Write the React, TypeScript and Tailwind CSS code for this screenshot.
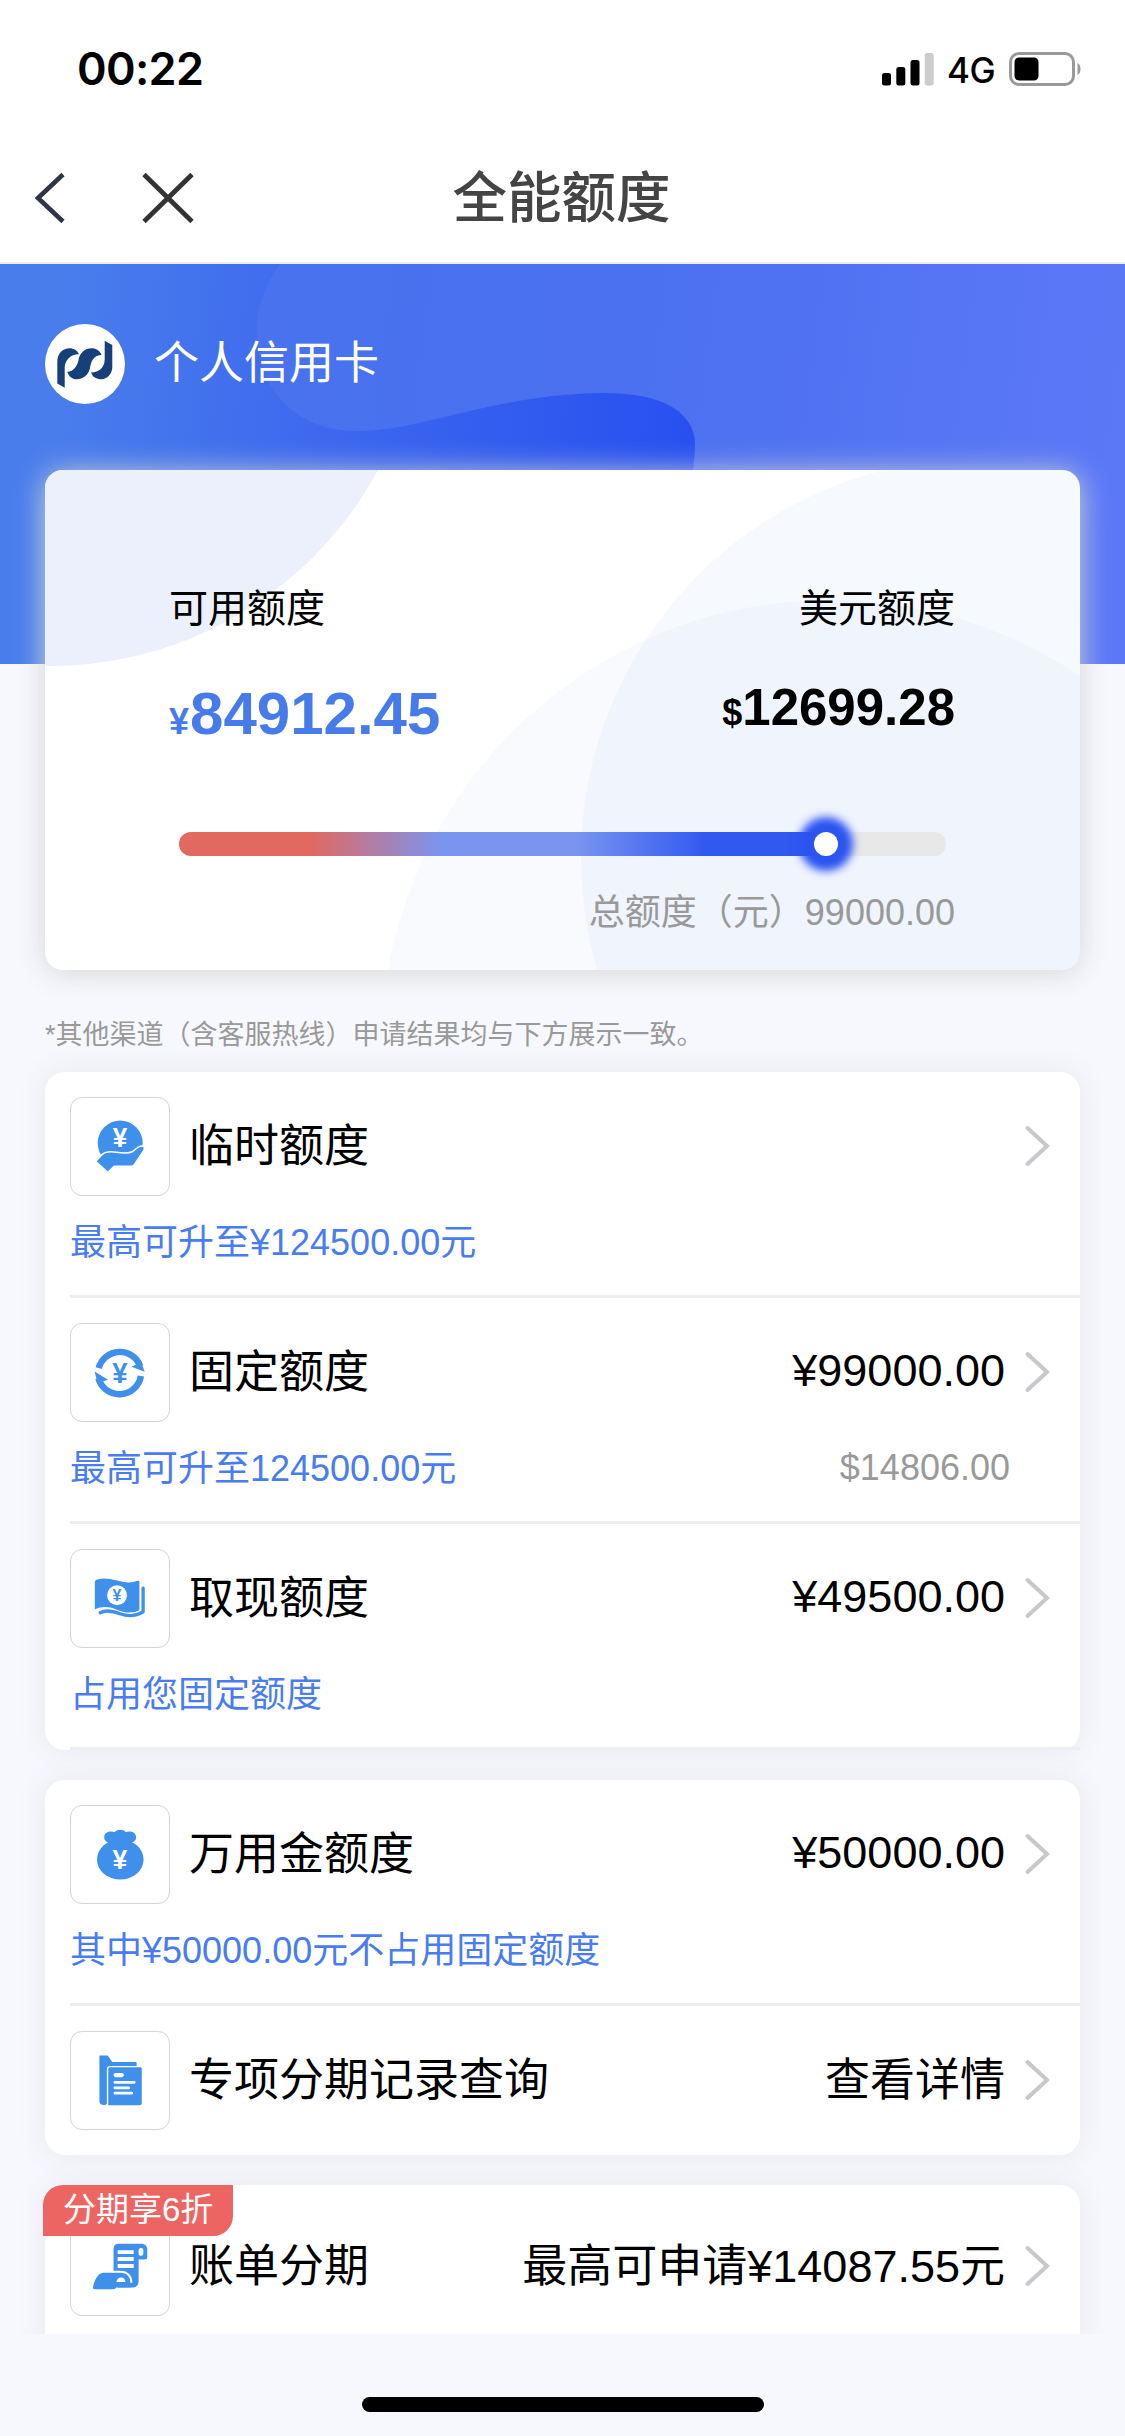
import type { ReactNode } from "react";

type LimitRow = {
  key: string;
  title: string;
  icon: ReactNode;
  value?: string;
  note?: string;
  subValue?: string;
};

const iconProps = { viewBox: "0 0 100 99", className: "h-full w-full" };

const YuanMark = ({ x = 50, y, size, fill }: { x?: number; y: number; size: number; fill: string }) => (
  <text
    x={x}
    y={y}
    fontSize={size}
    fill={fill}
    textAnchor="middle"
    textLength={size * 0.52}
    lengthAdjust="spacingAndGlyphs"
    fontWeight="700"
    fontFamily="Liberation Sans, sans-serif"
  >
    ¥
  </text>
);

const HandCoinIcon = () => (
  <svg {...iconProps} fill="#3f90ea">
    <circle cx="50.2" cy="46" r="23" />
    <YuanMark y={50.5} size={28.5} fill="#fff" />
    <path
      d="M25.2 64.5L32 57.5C36 54 41 54.6 46 55.4C52 56.3 59 57 63 54.6C66 52 70 48 73.5 49.2C76 50 75 52 74 54L65 67.5C64 69 62.5 69.8 61 69.8H44L37.6 76.2Z"
      stroke="#fff"
      strokeWidth="1.6"
    />
  </svg>
);

const RecycleYuanIcon = () => (
  <svg {...iconProps} fill="#3f90ea">
    <path d="M28.3 45A22.2 22.2 0 0 1 70.6 43" fill="none" stroke="#3f90ea" strokeWidth="6.6" />
    <path d="M61.8 43.6L71.5 38.5L75.2 48.8Z" />
    <path d="M71.3 53A22.2 22.2 0 0 1 28 55.5" fill="none" stroke="#3f90ea" strokeWidth="6.6" />
    <path d="M37.8 56.8L27.2 60.4L24 48.4Z" />
    <YuanMark y={60.2} size={30} fill="#3f90ea" />
  </svg>
);

const BanknoteIcon = () => (
  <svg {...iconProps} fill="#3f90ea">
    <path d="M24.3 33C24.3 31 25.5 30.4 27 30C34 28 40 29.5 46 31C54 33.2 61 34.2 68 31.4C69 31 69.8 31.6 69.8 32.8V61.6C62 65.3 54 64 46 60.6C38 57.4 31 57.6 24.3 60.6Z" />
    <path
      d="M29.8 64C36 60.4 43 62.4 50 65C58 67.8 67 67.2 73.6 63V39"
      fill="none"
      stroke="#3f90ea"
      strokeWidth="3.4"
      strokeLinecap="round"
      strokeLinejoin="round"
    />
    <circle cx="47" cy="46.2" r="10.2" fill="#fff" />
    <YuanMark x={47} y={52.4} size={17.5} fill="#3f90ea" />
  </svg>
);

const MoneyBagIcon = () => (
  <svg {...iconProps} fill="#3f90ea">
    <ellipse cx="50.3" cy="54.6" rx="23.8" ry="20.4" />
    <path d="M36 41L39 37.6C34.8 36.6 33.6 34 33.9 31.2C34.4 26.8 39.5 24.8 44.8 26.6C46.8 23.4 53.6 23.4 55.6 26.6C61 24.8 65.9 26.8 66.4 31.2C66.7 34 65.4 36.6 61.4 37.6L64.600 41Z" />
    <YuanMark y={63.8} size={29} fill="#fff" />
  </svg>
);

const FolderIcon = () => (
  <svg {...iconProps} fill="#3f90ea">
    <path d="M29 24H36.5C37.6 24 38 24.6 38.6 25.6L42 30.7H65.8C66.6 30.7 67 31 67 31.8V34.6H40C37.5 34.6 36.6 35.8 36.6 38V73C35.8 75.4 29 75.4 29 71Z" />
    <path d="M40 36H70.5C71.5 36 72.2 36.7 72.2 37.8V72.8C72.2 74 71.4 74.8 70.2 74.8H38V38C38 36.8 38.8 36 40 36Z" />
    <g stroke="#fff" strokeLinecap="round">
      <path d="M45.6 44H51.8" strokeWidth="4.4" />
      <path d="M44.8 51.4H64.6M44.8 57H59M44.8 62.4H62" strokeWidth="2.8" />
    </g>
  </svg>
);

const BillIcon = () => (
  <svg {...iconProps} fill="#3f90ea">
    <path d="M48.5 26.2H72C75.6 26.2 77.8 28.6 77.8 32V40C77.8 41.6 77 42.3 75.4 42.3H69V64.5C69 68.6 66.3 71 62.4 71H48L43.4 60V31.4C43.4 28.2 45.3 26.2 48.5 26.2Z" />
    <path d="M47.6 32.8H64V36.8H47.6ZM47.6 39.8H64V44H47.6ZM47.6 47H64V51H47.6Z" fill="#fff" />
    <rect x="69" y="30.6" width="4.8" height="8" rx="2.2" fill="#fff" />
    <path d="M22.4 70.5C23.6 65 25.6 60.5 28.4 58C30.2 56.4 32 56 34 56H49C56 56 60.6 60 61 66V71L46.4 71C45.4 72.4 44.2 72.6 43 72.6H24.4C22.8 72.6 22.2 72 22.4 70.5Z" />
    <path d="M42 54.8H50.5C57.6 54.8 61.6 59.5 61.6 66" fill="none" stroke="#fff" strokeWidth="2" />
    <path d="M46.2 65.2C47 61.8 49 60.6 51.2 60.6C53.6 60.6 55.4 62.4 55.6 65.2Z" fill="#fff" />
  </svg>
);

const ChevronRight = () => (
  <svg viewBox="0 0 26 42" className="-mt-0.5 h-[42px] w-[26px] shrink-0" fill="none" stroke="#c7c7cc" strokeWidth="4" strokeLinecap="round">
    <path d="M3.5 3L23 21L3.5 39" />
  </svg>
);

const BankLogo = () => (
  <svg viewBox="0 0 80 80" className="h-20 w-20 shrink-0">
    <circle cx="40" cy="40" r="40" fill="#fff" />
    <g fill="#17407b">
      <path d="M12.3 38C12.3 29 18 24.3 24.5 24.3C29 24.3 32.5 26.5 34 30.3C26 30 19.7 36 19.7 44V63.7L12.3 59.5Z" />
      <path d="M22.3 47.7C28 48 32.5 42 33.5 36C34.5 29 40 24.3 46.7 24.3C51 24.3 55 27 56.7 31C49 31 46 37 45 44C43.5 51 38 55.3 31.7 55.3C27 55.3 23.5 52 22.3 47.7Z" />
      <path d="M46 48.5C54 48 59.7 44 59.7 35V16.7L67.3 21V43C67.3 50 62 55.3 56.5 55.3C51.5 55.3 47.5 53 46 48.5Z" />
    </g>
  </svg>
);

const fixedRows: LimitRow[] = [
  { key: "temporary", title: "临时额度", icon: <HandCoinIcon />, note: "最高可升至¥124500.00元" },
  {
    key: "fixed",
    title: "固定额度",
    icon: <RecycleYuanIcon />,
    value: "¥99000.00",
    note: "最高可升至124500.00元",
    subValue: "$14806.00"
  },
  { key: "cash", title: "取现额度", icon: <BanknoteIcon />, value: "¥49500.00", note: "占用您固定额度" }
];

const loanRows: LimitRow[] = [
  { key: "loan", title: "万用金额度", icon: <MoneyBagIcon />, value: "¥50000.00", note: "其中¥50000.00元不占用固定额度" },
  { key: "records", title: "专项分期记录查询", icon: <FolderIcon />, value: "查看详情" }
];

const billRow: LimitRow = { key: "bill", title: "账单分期", icon: <BillIcon />, value: "最高可申请¥14087.55元" };

function Row({ row }: { row: LimitRow }) {
  return (
    <div className={`ml-[25px] pt-[25px] ${row.note ? "h-[226px] border-b-[3px] border-[#eeeeee]" : "h-[149px]"}`}>
      <div className="flex h-[99px] items-center pr-[30px]">
        <span className="h-[99px] w-[100px] shrink-0 rounded-xl border border-[#d4d4d4]">{row.icon}</span>
        <span className="ml-[19px] text-[45px] leading-[60px] text-black">{row.title}</span>
        <span className={`ml-auto mr-[19px] text-[45px] leading-[60px] text-black ${row.note ? "pb-[3px]" : ""}`}>{row.value}</span>
        <ChevronRight />
      </div>
      {row.note ? (
        <div className="mt-[23px] flex justify-between pr-[70px] text-4xl leading-[48px]">
          <span className="text-[#487cf0]">{row.note}</span>
          <span className="-mt-px text-[#999999]">{row.subValue}</span>
        </div>
      ) : null}
    </div>
  );
}

function StatusBar() {
  return (
    <div className="flex h-[132px] items-start justify-between pl-[77px] pr-[42px] pt-[40px] font-['Inter',sans-serif] text-black">
      <span className="text-[45px] font-semibold leading-[58px] tracking-[-0.7px]">00:22</span>
      <div className="flex h-[58px] items-center">
        <svg viewBox="0 0 52 33" className="h-[33px] w-[52px]">
          <rect x="0" y="20" width="9" height="12.5" rx="2.5" />
          <rect x="14.3" y="14" width="9" height="18.5" rx="2.5" />
          <rect x="28.5" y="7" width="9" height="25.5" rx="2.5" />
          <rect x="42.7" y="0" width="9" height="32.5" rx="2.5" fill="#cccccc" />
        </svg>
        <span className="ml-[13px] w-[49px] pt-0.5 text-[35px] font-medium leading-[58px] tracking-[-0.5px]">4G</span>
        <svg viewBox="0 0 74 34" className="ml-[13px] h-[34px] w-[74px]">
          <rect x="1.5" y="1.5" width="63" height="31" rx="8.5" fill="none" stroke="#999999" strokeWidth="3" />
          <rect x="5.5" y="5.5" width="24" height="23" rx="4.5" />
          <path d="M68.5 11C72.5 12.5 72.5 21.5 68.5 23Z" fill="#999999" />
        </svg>
      </div>
    </div>
  );
}

function TitleBar() {
  return (
    <div className="grid h-[132px] grid-cols-[1fr_auto_1fr] items-center border-b-2 border-[#ededed]">
      <div className="flex items-center gap-[75px] pl-8 pt-0.5">
        <svg viewBox="0 0 34 54" className="h-[54px] w-[34px]" fill="none" stroke="#2d3546" strokeWidth="4.6">
          <path d="M31 3.5L6 27L31 50.5" />
        </svg>
        <svg viewBox="0 0 54 54" className="h-[54px] w-[54px]" fill="none" stroke="#333333" strokeWidth="4.8">
          <path d="M3 3.5L51 50.5M51 3.5L3 50.5" />
        </svg>
      </div>
      <h1 className="-ml-0.5 pt-[3px] text-[54.5px] font-medium leading-[72px] text-[#444444]">全能额度</h1>
    </div>
  );
}

function HeroBackdrop() {
  return (
    <svg viewBox="0 0 1125 400" className="absolute inset-0 h-full w-full">
      <defs>
        <linearGradient id="hero-base" x1="0" y1="0" x2="700" y2="60" gradientUnits="userSpaceOnUse">
          <stop offset="0.1" stopColor="#497dec" />
          <stop offset="0.42" stopColor="#3f6bee" />
          <stop offset="1" stopColor="#2850f0" />
        </linearGradient>
        <linearGradient id="hero-wave" x1="257" y1="0" x2="1125" y2="120" gradientUnits="userSpaceOnUse">
          <stop offset="0" stopColor="#4872ee" />
          <stop offset="0.45" stopColor="#4b70f0" />
          <stop offset="1" stopColor="#5b78f7" />
        </linearGradient>
      </defs>
      <rect width="1125" height="400" fill="url(#hero-base)" />
      <path
        d="M280 0C262 26 255 50 257 72C259 115 285 167 359 167C420 167 500 129 605 129C665 129 695 150 695 180C695 230 670 300 620 400H1125V0Z"
        fill="url(#hero-wave)"
      />
    </svg>
  );
}

function SummaryCard() {
  return (
    <section className="relative mx-[45px] -mt-[194px] h-[500px] rounded-[18px] bg-white shadow-[0_3px_30px_#d6d6d6]">
      <svg viewBox="0 0 1035 500" className="absolute inset-0 h-full w-full rounded-[18px]">
        <circle cx="5" cy="-176.5" r="372.5" fill="#ebf0fc" />
        <circle cx="936" cy="388" r="400" fill="#4888f0" fillOpacity="0.05" />
        <circle cx="785" cy="579" r="449" fill="#4888f0" fillOpacity="0.04" />
      </svg>
      <div className="relative pt-[110px]">
        <div className="flex justify-between pl-[124px] pr-[125px] text-[39px] leading-[58px] text-black">
          <span>可用额度</span>
          <span>美元额度</span>
        </div>
        <div className="mt-[36px] flex h-[80px] items-start justify-between pl-[124px] pr-[125px] font-bold">
          <span className="text-[60px] leading-[80px] text-[#487bea]">
            <span className="mr-px text-4xl">¥</span>84912.45
          </span>
          <span className="text-[51px] leading-[68px] text-black">
            <span className="text-4xl">$</span>12699.28
          </span>
        </div>
        <div className="mx-[134px] mt-[78px] flex h-6 rounded-full bg-[#e8e8e8]">
          <div className="flex h-6 w-[659px] justify-end rounded-l-full bg-[linear-gradient(90deg,#e16960_20%,#7a95f0_40%,#7a95f0_60%,#3159f0_80%)]">
            <span className="h-6 w-6 rounded-full bg-white shadow-[0_0_9px_15px_#2b54f0]" />
          </div>
        </div>
        <p className="mt-[33px] px-[125px] text-right text-4xl leading-[48px] text-[#999999]">总额度（元）99000.00</p>
      </div>
    </section>
  );
}

const cardClass = "mx-[45px] rounded-[20px] bg-white shadow-[0_0_30px_#e6e7ec]";

export default function App() {
  return (
    <div className="flex h-[2436px] w-[1125px] flex-col overflow-hidden bg-[#f7f8fd] font-['Liberation_Sans','Noto_Sans_CJK_SC',sans-serif]">
      <header className="bg-white">
        <StatusBar />
        <TitleBar />
      </header>

      <main className="h-[2070px] shrink-0 overflow-hidden">
        <div className="relative h-[400px]">
          <HeroBackdrop />
          <div className="relative flex items-center gap-[29px] pl-[45px] pt-[60px]">
            <BankLogo />
            <span className="text-[45px] leading-[60px] text-white">个人信用卡</span>
          </div>
        </div>

        <SummaryCard />

        <p className="ml-[45px] mt-[45px] h-[57px] text-[27px] leading-[40px] text-[#999999]">
          *其他渠道（含客服热线）申请结果均与下方展示一致。
        </p>

        <section className={cardClass}>
          {fixedRows.map((row) => (
            <Row key={row.key} row={row} />
          ))}
        </section>

        <section className={`mt-[30px] ${cardClass}`}>
          {loanRows.map((row) => (
            <Row key={row.key} row={row} />
          ))}
        </section>

        {/* runs past the bottom of the scroll area */}
        <section className={`relative mt-[30px] pb-10 pt-[7px] ${cardClass}`}>
          <Row row={billRow} />
          <span className="absolute -left-0.5 top-0 h-[51px] w-[190px] rounded-br-[20px] rounded-tl-[20px] bg-[#ed6562] pl-5 text-[33px] leading-[50px] text-white">
            分期享6折
          </span>
        </section>
      </main>

      <div className="mx-auto mt-[63px] h-[15px] w-[402px] shrink-0 rounded-full bg-black" />
    </div>
  );
}
